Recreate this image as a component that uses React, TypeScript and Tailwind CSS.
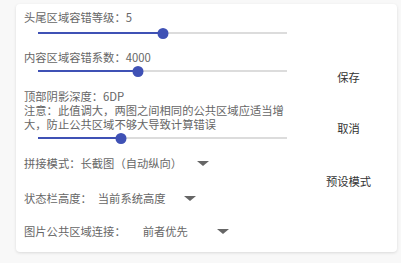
import React from 'react';

const font = { fontFamily: '"Noto Sans CJK SC", "Noto Sans", sans-serif' };

const Slider = ({ value }: { value: number }) => (
    <div className="relative ml-[14px] h-[12px] w-[249px]">
        <div className="absolute left-0 right-0 top-[5px] h-[2px] bg-[#dcdcdc]" />
        <div className="absolute left-0 top-[5px] h-[2px] bg-[#3f51b5]" style={{ width: `${value * 100}%` }} />
        <div
            className="absolute top-[0.5px] h-[11px] w-[11px] -translate-x-1/2 rounded-full bg-[#3f51b5]"
            style={{ left: `${value * 100}%` }}
        />
    </div>
);

const Caret = ({ ml }: { ml: string }) => (
    <span className={`${ml} inline-block h-0 w-0 border-x-[6.5px] border-t-[5px] border-x-transparent border-t-[#666]`} />
);

const App = () => {
    return (
        <div className="h-[263px] w-[401px] bg-[#f8f8f8] pl-[16px] pt-[4px]" style={font}>
            <div className="flex h-[248px] w-[381px] rounded-[4px] bg-white shadow-[0_1px_3px_rgba(0,0,0,0.12)]">
                {/* Settings */}
                <div className="w-[284px] pl-[8px] pt-[6px] text-[11.3px] leading-[14px] text-[#666]">
                    <div>头尾区域容错等级：5</div>
                    <div className="mt-[3px]"><Slider value={0.5} /></div>

                    <div className="mt-[11px]">内容区域容错系数：4000</div>
                    <div className="mt-[1px]"><Slider value={0.4} /></div>

                    <div className="mt-[12px]">顶部阴影深度：6DP</div>
                    <div className="whitespace-nowrap">注意：此值调大，两图之间相同的公共区域应适当增</div>
                    <div>大，防止公共区域不够大导致计算错误</div>
                    <div className="mt-[1px]"><Slider value={0.335} /></div>

                    <div className="mt-[12px] flex items-center">
                        <span>拼接模式：长截图（自动纵向）</span>
                        <Caret ml="ml-[15px]" />
                    </div>
                    <div className="mt-[21px] flex items-center">
                        <span>状态栏高度：</span>
                        <span className="ml-[6px]">当前系统高度</span>
                        <Caret ml="ml-[18px]" />
                    </div>
                    <div className="mt-[19px] flex items-center">
                        <span>图片公共区域连接：</span>
                        <span className="ml-[17px]">前者优先</span>
                        <Caret ml="ml-[29px]" />
                    </div>
                </div>

                {/* Actions */}
                <div className="flex flex-1 flex-col items-center text-[11.3px] leading-[14px] text-[#333]">
                    <button className="mt-[66px]">保存</button>
                    <button className="mt-[37px]">取消</button>
                    <button className="mt-[39px]">预设模式</button>
                </div>
            </div>
        </div>
    );
};

export default App;
